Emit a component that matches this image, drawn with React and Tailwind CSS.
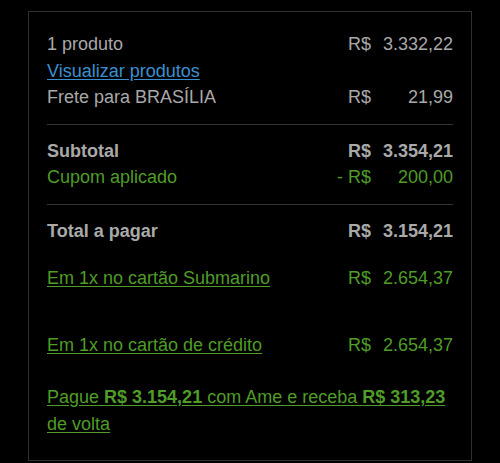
const gray = 'text-[#a9a9a9]';
const green = 'text-[#4f9c27]';

const Row = ({ label, cur = 'R$', value, className = '', labelClass = '' }) => (
  <div className={`flex items-center ${className}`}>
    <div className={`flex-1 ${labelClass}`}>{label}</div>
    <div className="text-right">{cur}</div>
    <div className="w-[82px] text-right">{value}</div>
  </div>
);

export default function App() {
  return (
    <div
      className="min-h-[463px] bg-black pt-[11px] text-[18px] leading-[26.5px]"
      style={{ fontFamily: '"Liberation Sans", Arial, sans-serif' }}
    >
      <div className="mx-auto w-[444px] border border-[#303030] px-[18px] pt-[19px] pb-[23px]">
        <div className={gray}>
          <Row label="1 produto" value="3.332,22" />
          <a href="#" className="block w-fit text-[#3b8fd0] underline underline-offset-2">
            Visualizar produtos
          </a>
          <Row label="Frete para BRASÍLIA" value="21,99" />
        </div>

        <div className="mt-[13px] mb-[13px] h-px bg-[#333333]" />

        <Row label="Subtotal" value="3.354,21" className={`font-bold ${gray}`} />
        <Row label="Cupom aplicado" cur="- R$" value="200,00" className={green} />

        <div className="mt-[13px] mb-[13px] h-px bg-[#333333]" />

        <Row label="Total a pagar" value="3.154,21" className={`font-bold ${gray}`} />

        <Row
          label={<a href="#" className="underline underline-offset-2">Em 1x no cartão Submarino</a>}
          value="2.654,37"
          className={`mt-[21px] ${green}`}
        />
        <Row
          label={<a href="#" className="underline underline-offset-2">Em 1x no cartão de crédito</a>}
          value="2.654,37"
          className={`mt-[40px] ${green}`}
        />

        <p className={`mt-[26px] ${green}`}>
          <a href="#" className="underline underline-offset-2">
            Pague <b>R$ 3.154,21</b> com Ame e receba <b>R$ 313,23</b> de volta
          </a>
        </p>
      </div>
    </div>
  );
}
